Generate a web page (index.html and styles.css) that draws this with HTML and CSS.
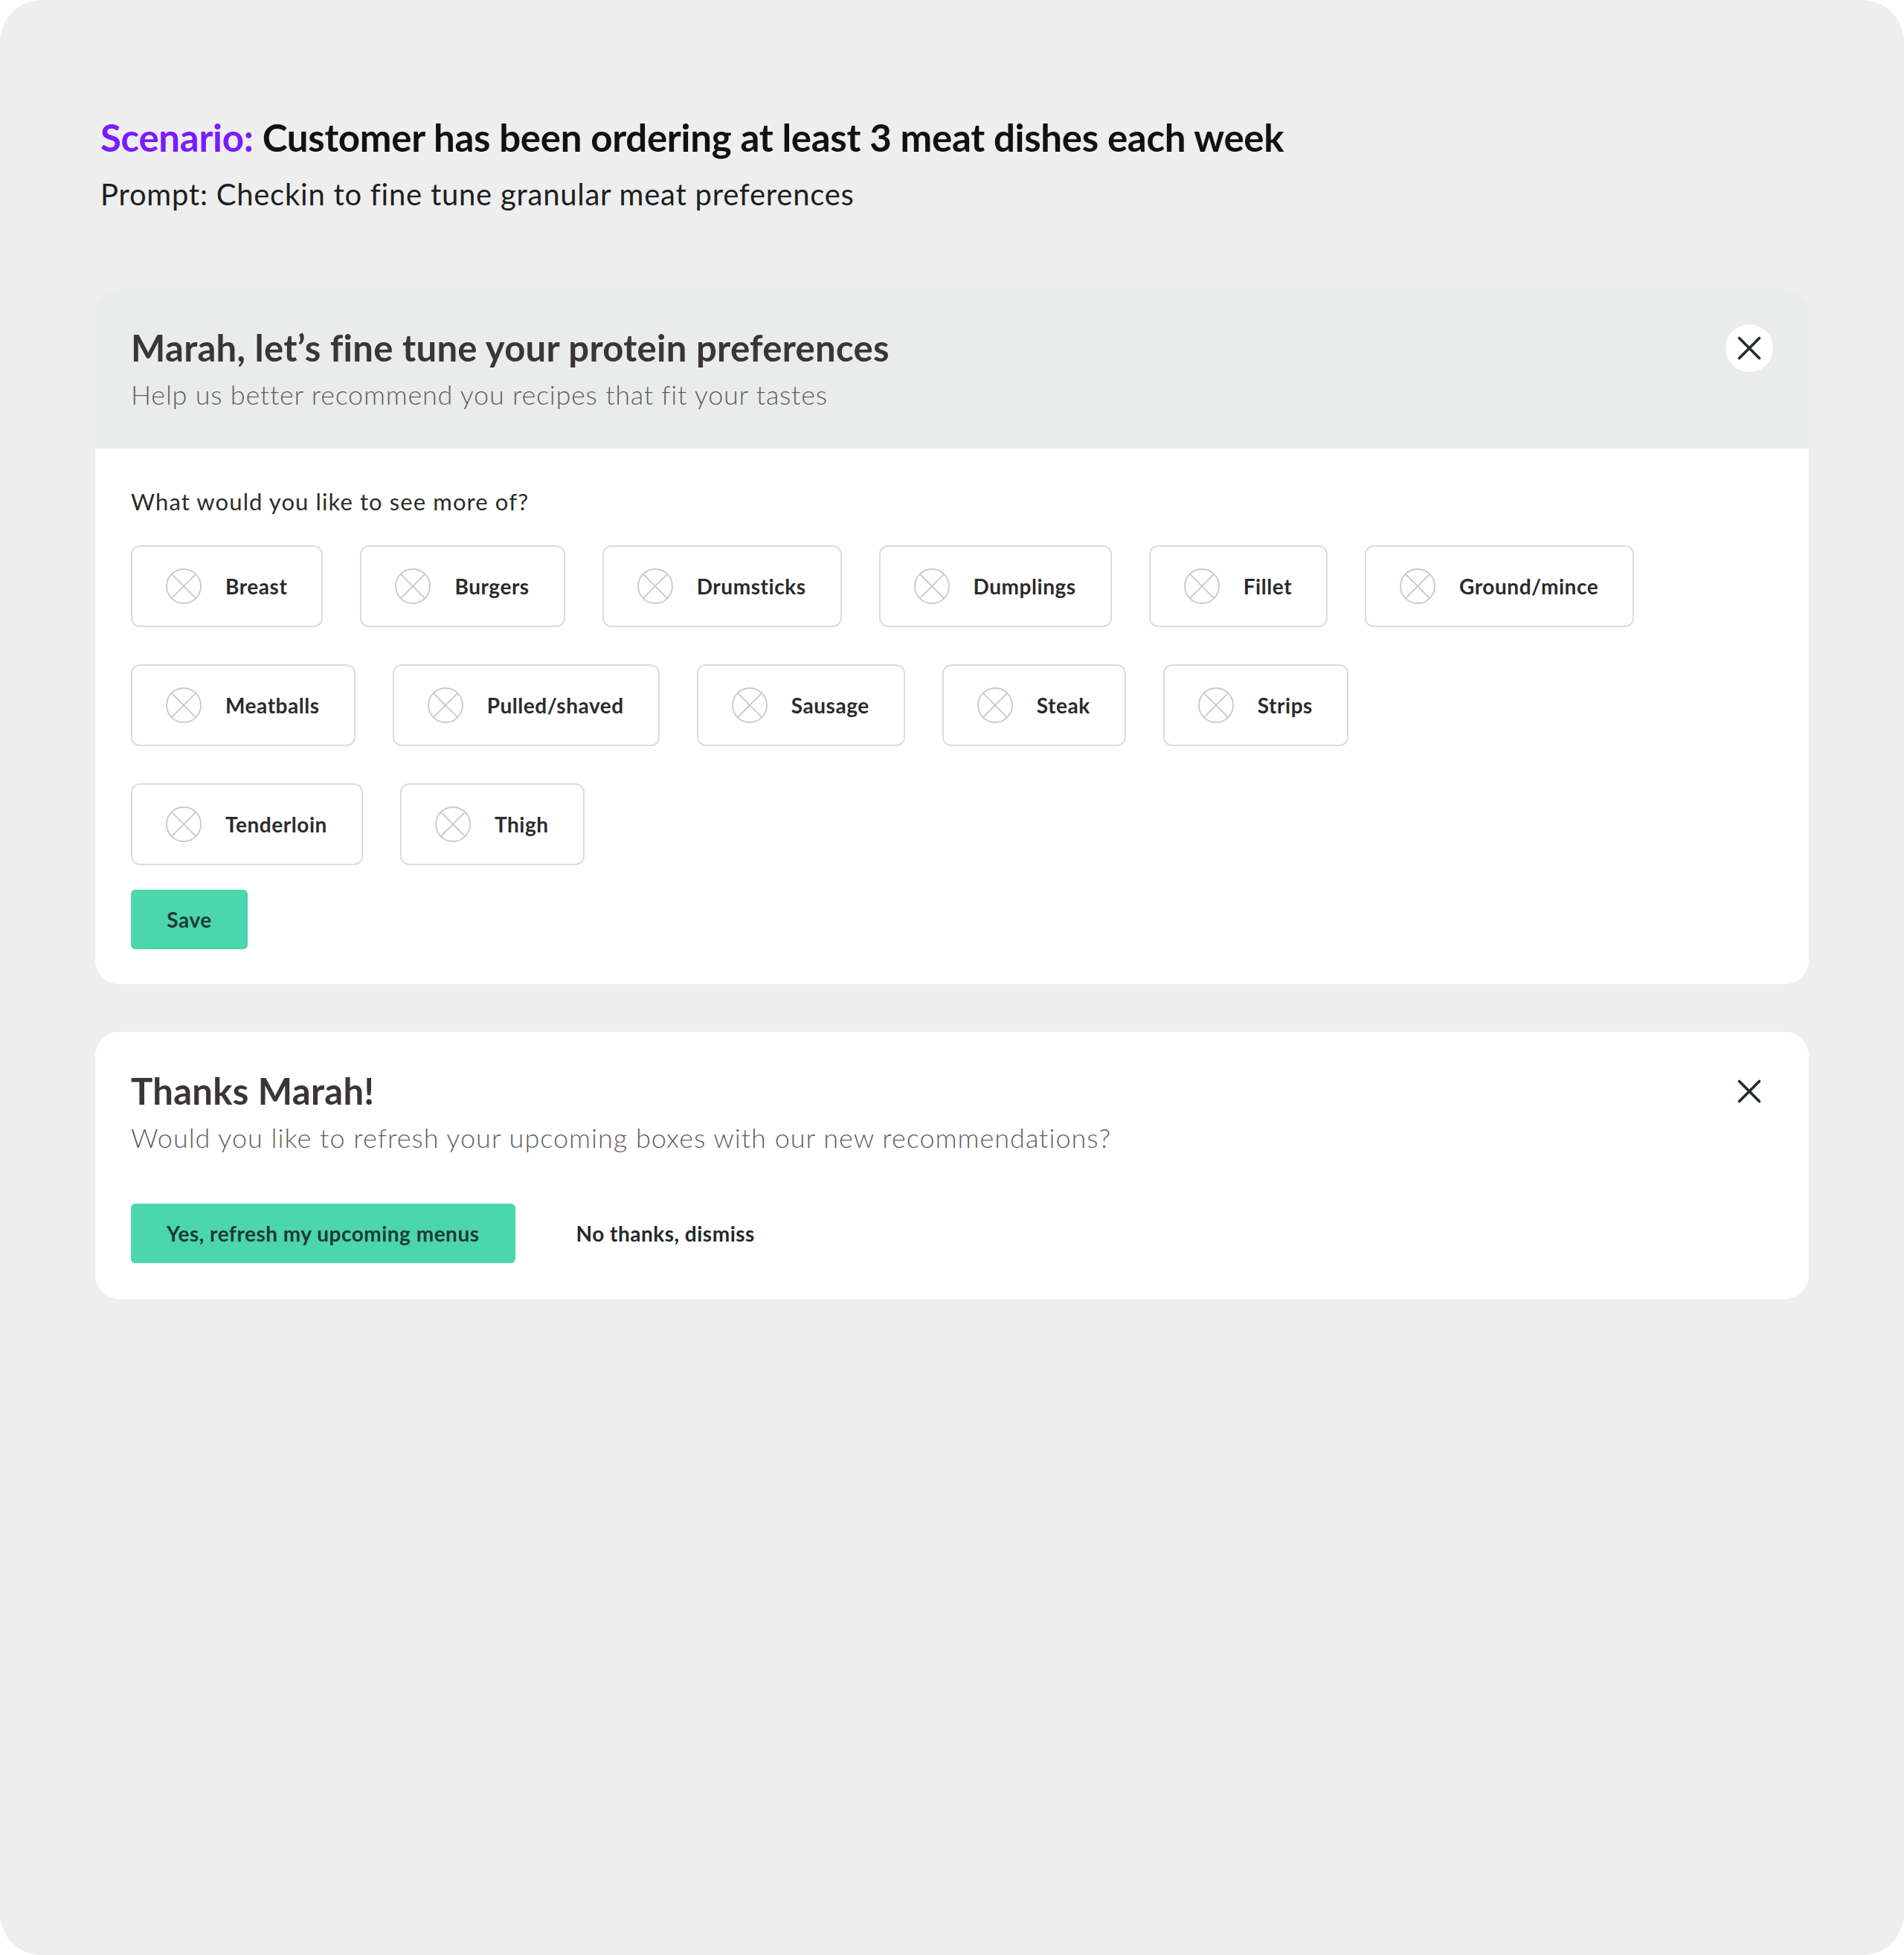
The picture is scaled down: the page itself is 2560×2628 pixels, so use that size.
FILE: index.html
```html
<!DOCTYPE html>
<html lang="en">
<head>
<meta charset="utf-8">
<title>Protein preferences</title>
<link rel="stylesheet" href="styles.css">
</head>
<body>
<div class="frame">
  <header class="scenario">
    <h1 class="scenario-title"><span class="accent">Scenario:</span> Customer has been ordering at least 3 meat dishes each week</h1>
    <p class="scenario-prompt">Prompt: Checkin to fine tune granular meat preferences</p>
  </header>

  <section class="card">
    <div class="card-head">
      <div class="head-text">
        <h2 class="card-title">Marah, let’s fine tune your protein preferences</h2>
        <p class="card-sub">Help us better recommend you recipes that fit your tastes</p>
      </div>
      <button class="close close-filled" aria-label="Close">
        <svg viewBox="0 0 64 64" width="64" height="64"><path d="M18.5 18.5 L45.5 45.5 M45.5 18.5 L18.5 45.5" stroke="#1f2b29" stroke-width="3.6" stroke-linecap="round" fill="none"/></svg>
      </button>
    </div>
    <div class="card-body">
      <p class="question">What would you like to see more of?</p>
      <div class="chip-rows">
        <div class="chip-row">
          <span class="chip"><svg class="chip-icon" viewBox="0 0 48 48"><circle cx="24" cy="24" r="23" /><path d="M7.7 7.7 L40.3 40.3 M40.3 7.7 L7.7 40.3"/></svg><span class="chip-label">Breast</span></span>
          <span class="chip"><svg class="chip-icon" viewBox="0 0 48 48"><circle cx="24" cy="24" r="23" /><path d="M7.7 7.7 L40.3 40.3 M40.3 7.7 L7.7 40.3"/></svg><span class="chip-label">Burgers</span></span>
          <span class="chip"><svg class="chip-icon" viewBox="0 0 48 48"><circle cx="24" cy="24" r="23" /><path d="M7.7 7.7 L40.3 40.3 M40.3 7.7 L7.7 40.3"/></svg><span class="chip-label">Drumsticks</span></span>
          <span class="chip"><svg class="chip-icon" viewBox="0 0 48 48"><circle cx="24" cy="24" r="23" /><path d="M7.7 7.7 L40.3 40.3 M40.3 7.7 L7.7 40.3"/></svg><span class="chip-label">Dumplings</span></span>
          <span class="chip"><svg class="chip-icon" viewBox="0 0 48 48"><circle cx="24" cy="24" r="23" /><path d="M7.7 7.7 L40.3 40.3 M40.3 7.7 L7.7 40.3"/></svg><span class="chip-label">Fillet</span></span>
          <span class="chip"><svg class="chip-icon" viewBox="0 0 48 48"><circle cx="24" cy="24" r="23" /><path d="M7.7 7.7 L40.3 40.3 M40.3 7.7 L7.7 40.3"/></svg><span class="chip-label">Ground/mince</span></span>
        </div>
        <div class="chip-row">
          <span class="chip"><svg class="chip-icon" viewBox="0 0 48 48"><circle cx="24" cy="24" r="23" /><path d="M7.7 7.7 L40.3 40.3 M40.3 7.7 L7.7 40.3"/></svg><span class="chip-label">Meatballs</span></span>
          <span class="chip"><svg class="chip-icon" viewBox="0 0 48 48"><circle cx="24" cy="24" r="23" /><path d="M7.7 7.7 L40.3 40.3 M40.3 7.7 L7.7 40.3"/></svg><span class="chip-label">Pulled/shaved</span></span>
          <span class="chip"><svg class="chip-icon" viewBox="0 0 48 48"><circle cx="24" cy="24" r="23" /><path d="M7.7 7.7 L40.3 40.3 M40.3 7.7 L7.7 40.3"/></svg><span class="chip-label">Sausage</span></span>
          <span class="chip"><svg class="chip-icon" viewBox="0 0 48 48"><circle cx="24" cy="24" r="23" /><path d="M7.7 7.7 L40.3 40.3 M40.3 7.7 L7.7 40.3"/></svg><span class="chip-label">Steak</span></span>
          <span class="chip"><svg class="chip-icon" viewBox="0 0 48 48"><circle cx="24" cy="24" r="23" /><path d="M7.7 7.7 L40.3 40.3 M40.3 7.7 L7.7 40.3"/></svg><span class="chip-label">Strips</span></span>
        </div>
        <div class="chip-row">
          <span class="chip"><svg class="chip-icon" viewBox="0 0 48 48"><circle cx="24" cy="24" r="23" /><path d="M7.7 7.7 L40.3 40.3 M40.3 7.7 L7.7 40.3"/></svg><span class="chip-label">Tenderloin</span></span>
          <span class="chip"><svg class="chip-icon" viewBox="0 0 48 48"><circle cx="24" cy="24" r="23" /><path d="M7.7 7.7 L40.3 40.3 M40.3 7.7 L7.7 40.3"/></svg><span class="chip-label">Thigh</span></span>
        </div>
      </div>
      <button class="btn btn-primary btn-save">Save</button>
    </div>
  </section>

  <section class="card card-thanks">
    <div class="thanks-head">
      <div class="head-text">
        <h2 class="card-title">Thanks Marah!</h2>
        <p class="card-sub">Would you like to refresh your upcoming boxes with our new recommendations?</p>
      </div>
      <button class="close" aria-label="Close">
        <svg viewBox="0 0 64 64" width="64" height="64"><path d="M18.5 18.5 L45.5 45.5 M45.5 18.5 L18.5 45.5" stroke="#1f2b29" stroke-width="3.6" stroke-linecap="round" fill="none"/></svg>
      </button>
    </div>
    <div class="actions">
      <button class="btn btn-primary">Yes, refresh my upcoming menus</button>
      <button class="btn btn-ghost">No thanks, dismiss</button>
    </div>
  </section>
</div>
</body>
</html>
```

FILE: styles.css
```css
* { box-sizing: border-box; }

html, body {
  margin: 0;
  padding: 0;
  background: #ffffff;
}

body {
  font-family: Lato, "Open Sans", "Liberation Sans", sans-serif;
  color: #2a2a2a;
}

.frame {
  width: 2560px;
  height: 2628px;
  background: #eeeeee;
  border-radius: 56px;
  padding: 155px 128px 0 128px;
  display: flex;
  flex-direction: column;
}

.scenario {
  padding-left: 7px;
  margin-bottom: 103px;
}

.scenario-title {
  margin: 0;
  font-size: 51px;
  line-height: 60px;
  font-weight: 700;
  color: #111111;
  letter-spacing: -0.3px;
}

.accent {
  color: #7a1bff;
}

.scenario-prompt {
  margin: 22px 0 0 0;
  font-size: 40px;
  line-height: 48px;
  font-weight: 400;
  color: #1e1e1e;
  letter-spacing: 0.75px;
}

.card {
  background: #ffffff;
  border-radius: 32px;
  overflow: hidden;
}

.card-head {
  background: #eaebeb;
  padding: 50px 48px 49px 48px;
  display: flex;
  justify-content: space-between;
  align-items: flex-start;
  height: 215px;
}

.card-head .close {
  margin-top: -2px;
}

.head-text {
  display: flex;
  flex-direction: column;
  gap: 12px;
}

.card-title {
  margin: 0;
  font-size: 49px;
  line-height: 58px;
  font-weight: 700;
  color: #3a3636;
  letter-spacing: 0.3px;
}

.card-sub {
  margin: 0;
  font-size: 36px;
  line-height: 44px;
  font-weight: 300;
  color: #635f5f;
  letter-spacing: 0.75px;
}

.card-thanks .card-sub {
  letter-spacing: 1px;
}

.close {
  width: 64px;
  height: 64px;
  border: 0;
  padding: 0;
  background: transparent;
  border-radius: 50%;
  display: flex;
  align-items: center;
  justify-content: center;
  flex-shrink: 0;
}

.close-filled {
  background: #ffffff;
}

.card-body {
  padding: 51px 48px 47px 48px;
}

.question {
  margin: 0 0 39px 0;
  font-size: 31px;
  line-height: 40px;
  color: #2b2b2b;
  letter-spacing: 1.1px;
}

.chip-rows {
  display: flex;
  flex-direction: column;
  gap: 50px;
}

.chip-row {
  display: flex;
  gap: 50px;
}

.chip {
  height: 110px;
  border: 2px solid #dddddd;
  border-radius: 12px;
  padding: 0 46px 0 45px;
  display: flex;
  align-items: center;
  gap: 32px;
  background: #ffffff;
}

.chip-icon {
  width: 48px;
  height: 48px;
  fill: none;
  stroke: #c9c9c9;
  stroke-width: 1.8;
  flex-shrink: 0;
}

.chip-label {
  font-size: 28px;
  line-height: 34px;
  font-weight: 700;
  color: #2b2b2b;
  letter-spacing: 0.55px;
}

.btn {
  height: 80px;
  border: 0;
  border-radius: 6px;
  padding: 0 48px;
  font-family: inherit;
  font-size: 28px;
  font-weight: 700;
  letter-spacing: 0.5px;
  display: inline-flex;
  align-items: center;
  justify-content: center;
  background: transparent;
  color: #1f2b29;
}

.btn-primary {
  background: #4cd6ab;
  color: #1d3a34;
}

.btn-save {
  margin-top: 33px;
  width: 157px;
  padding: 0;
}

.card-thanks {
  margin-top: 64px;
  padding: 50px 48px 48px 48px;
}

.thanks-head {
  display: flex;
  justify-content: space-between;
  align-items: flex-start;
}

.thanks-head .close {
  margin-top: -2px;
}

.actions {
  margin-top: 67px;
  display: flex;
  gap: 34px;
}
```
